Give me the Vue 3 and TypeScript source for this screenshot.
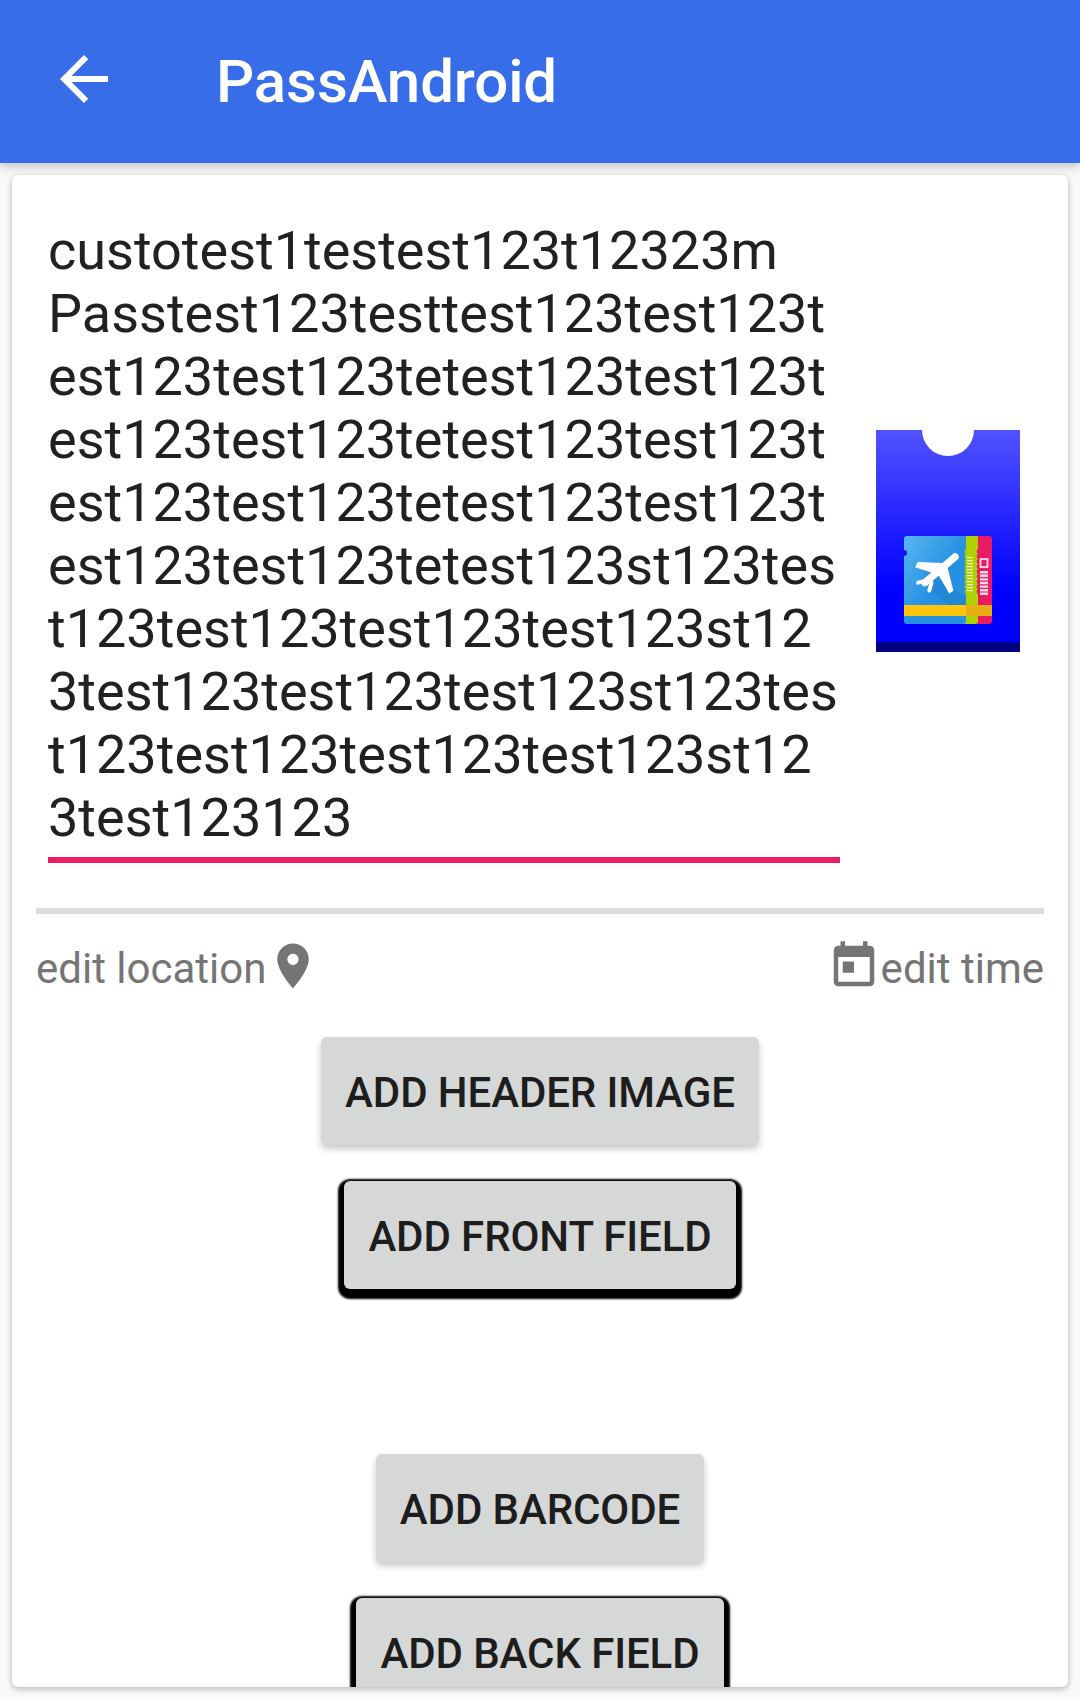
<template>
  <div class="page">
    <header class="appBar">
      <svg class="backIcon" viewBox="0 0 24 24">
        <path d="M20 11H7.83l5.59-5.59L12 4l-8 8 8 8 1.41-1.41L7.83 13H20v-2z" />
      </svg>
      <span class="appTitle">PassAndroid</span>
    </header>

    <main class="card">
      <section class="descRow">
        <div class="descInput">
          <div v-for="(line, i) in descLines" :key="i">{{ line }}</div>
        </div>
        <svg class="passIcon" viewBox="0 0 144 222">
          <defs>
            <linearGradient id="passBlue" x1="0" y1="0" x2="0" y2="1">
              <stop offset="0" stop-color="#5252ff" />
              <stop offset="0.75" stop-color="#0000ff" />
            </linearGradient>
            <linearGradient id="ticketBlue" x1="0" y1="0" x2="1" y2="1">
              <stop offset="0" stop-color="#5ab6f0" />
              <stop offset="0.55" stop-color="#2590e2" />
            </linearGradient>
            <filter id="soft" x="-5%" y="-5%" width="110%" height="110%">
              <feGaussianBlur stdDeviation="0.5" />
            </filter>
          </defs>
          <path d="M0 0H46A26 26 0 0 0 98 0H144V212H0Z" fill="url(#passBlue)" />
          <rect y="212" width="144" height="10" fill="#000080" />
          <g transform="translate(28 106)" filter="url(#soft)">
            <rect x="50" width="38" height="88" rx="3" fill="#e91e63" />
            <path d="M50 0H74V13a3 3 0 0 0 0 5a3 3 0 0 0 0 5a3 3 0 0 0 0 5a3 3 0 0 0 0 5a3 3 0 0 0 0 5a3 3 0 0 0 0 5a3 3 0 0 0 0 5a3 3 0 0 0 0 5a3 3 0 0 0 0 5V85a3 3 0 0 1 -3 3H50Z" fill="#aed100" />
            <path d="M3 0H62V13a3 3 0 0 0 0 5a3 3 0 0 0 0 5a3 3 0 0 0 0 5a3 3 0 0 0 0 5a3 3 0 0 0 0 5a3 3 0 0 0 0 5a3 3 0 0 0 0 5a3 3 0 0 0 0 5a3 3 0 0 0 0 5V85a3 3 0 0 1 -3 3H3A3 3 0 0 1 0 85V20A3 3 0 0 0 0 14V3A3 3 0 0 1 3 0Z" fill="url(#ticketBlue)" />
            <path d="M66 21V57" stroke="#eef5c8" stroke-width="6" stroke-dasharray="1.2 1.8" />
            <rect x="76.5" y="23" width="7" height="8" fill="none" stroke="#fbdde8" stroke-width="1.8" />
            <path d="M80 35V60" stroke="#fbdde8" stroke-width="8" stroke-dasharray="2.4 1.2" />
            <path d="M14 27 L62 62 V69 H44 L26 52Z" fill="#000" opacity="0.05" />
            <g fill="#fff" stroke="#fff" stroke-linejoin="round" transform="translate(32 40) scale(1.12) translate(-32 -40)">
              <path d="M38 29L30 37L14 32L16 28Z" />
              <path d="M33 36L41 29L47 53L44 55Z" />
              <path d="M49 23L22 46" fill="none" stroke-width="6.5" stroke-linecap="round" />
              <path d="M16 46L24 44" fill="none" stroke-width="3.5" stroke-linecap="round" />
              <path d="M26 53L28 46" fill="none" stroke-width="3.5" stroke-linecap="round" />
            </g>
            <rect y="69" width="88" height="11" fill="#ffc50a" />
            <rect x="62" y="69" width="26" height="11" fill="#e8ae12" />
          </g>
        </svg>
      </section>

      <div class="divider"></div>

      <section class="metaRow">
        <div class="metaItem">
          <span>edit location</span>
          <svg class="metaIcon" viewBox="0 0 24 24">
            <path d="M12 2C8.13 2 5 5.13 5 9c0 5.25 7 13 7 13s7-7.75 7-13c0-3.87-3.13-7-7-7zm0 9.5c-1.38 0-2.5-1.12-2.5-2.5s1.12-2.5 2.5-2.5 2.5 1.12 2.5 2.5-1.12 2.5-2.5 2.5z" />
          </svg>
        </div>
        <div class="metaItem">
          <svg class="metaIcon" viewBox="0 0 24 24">
            <path d="M19 3h-1V1h-2v2H8V1H6v2H5c-1.11 0-1.99.9-1.99 2L3 19c0 1.1.89 2 2 2h14c1.1 0 2-.9 2-2V5c0-1.1-.9-2-2-2zm0 16H5V8h14v11zM7 10h5v5H7z" />
          </svg>
          <span>edit time</span>
        </div>
      </section>

      <section class="actions">
        <button class="action">ADD HEADER IMAGE</button>
        <button class="action hard">ADD FRONT FIELD</button>
        <button class="action spaced">ADD BARCODE</button>
        <button class="action hard">ADD BACK FIELD</button>
      </section>
    </main>
  </div>
</template>

<script setup lang="ts">
const descLines: string[] = [
  "custotest1testest123t12323m",
  "Passtest123testtest123test123t",
  "est123test123tetest123test123t",
  "est123test123tetest123test123t",
  "est123test123tetest123test123t",
  "est123test123tetest123st123tes",
  "t123test123test123test123st12",
  "3test123test123test123st123tes",
  "t123test123test123test123st12",
  "3test123123",
];
</script>

<style>
html,
body {
  margin: 0;
  background: #fafafa;
}
</style>

<style scoped>
.page {
  display: flex;
  flex-direction: column;
  height: 1699px;
  overflow: hidden;
  font-family: Roboto, "Liberation Sans", sans-serif;
}
.appBar {
  position: relative;
  z-index: 1;
  display: flex;
  align-items: center;
  flex: none;
  height: 163px;
  padding-left: 48px;
  box-sizing: border-box;
  background: #386dea;
  box-shadow: 0 3px 10px rgba(0, 0, 0, 0.25);
}
.backIcon {
  width: 72px;
  height: 72px;
  margin: 0 96px 5px 0;
  fill: #fff;
}
.appTitle {
  color: #fff;
  font-size: 60px;
  font-weight: 500;
  letter-spacing: -0.1px;
}
.card {
  flex: none;
  height: 1512px;
  margin: 12px 12px 0;
  padding: 0 24px;
  box-sizing: border-box;
  overflow: hidden;
  border-radius: 6px;
  background: #fff;
  box-shadow: 0 2px 6px rgba(0, 0, 0, 0.28);
}
.descRow {
  display: flex;
  align-items: center;
  justify-content: space-between;
  padding: 44px 24px 45px 12px;
}
.descInput {
  width: 792px;
  padding-bottom: 8px;
  border-bottom: 6px solid #e91e63;
  color: #212121;
  font-size: 54px;
  line-height: 63px;
  white-space: pre;
}
.passIcon {
  width: 144px;
  height: 222px;
}
.divider {
  height: 6px;
  background: #ddd;
}
.metaRow {
  display: flex;
  justify-content: space-between;
  margin-top: 25px;
  color: #757575;
  font-size: 42px;
}
.metaItem {
  display: flex;
  align-items: flex-end;
}
.metaIcon {
  width: 54px;
  height: 54px;
  fill: #757575;
}
.actions {
  display: flex;
  flex-direction: column;
  align-items: center;
  gap: 36px;
  margin-top: 44px;
}
.action {
  height: 108px;
  padding: 2px 24px 0;
  border: 0;
  border-radius: 6px;
  background: #d6d7d7;
  color: #1d1d1d;
  font-family: inherit;
  font-size: 42px;
  font-weight: 500;
  letter-spacing: -0.1px;
  box-shadow: 0 4px 7px rgba(0, 0, 0, 0.22);
}
.hard {
  box-shadow: 0 4px 2px 6px #000;
}
.spaced {
  margin-top: 129px;
}
</style>
